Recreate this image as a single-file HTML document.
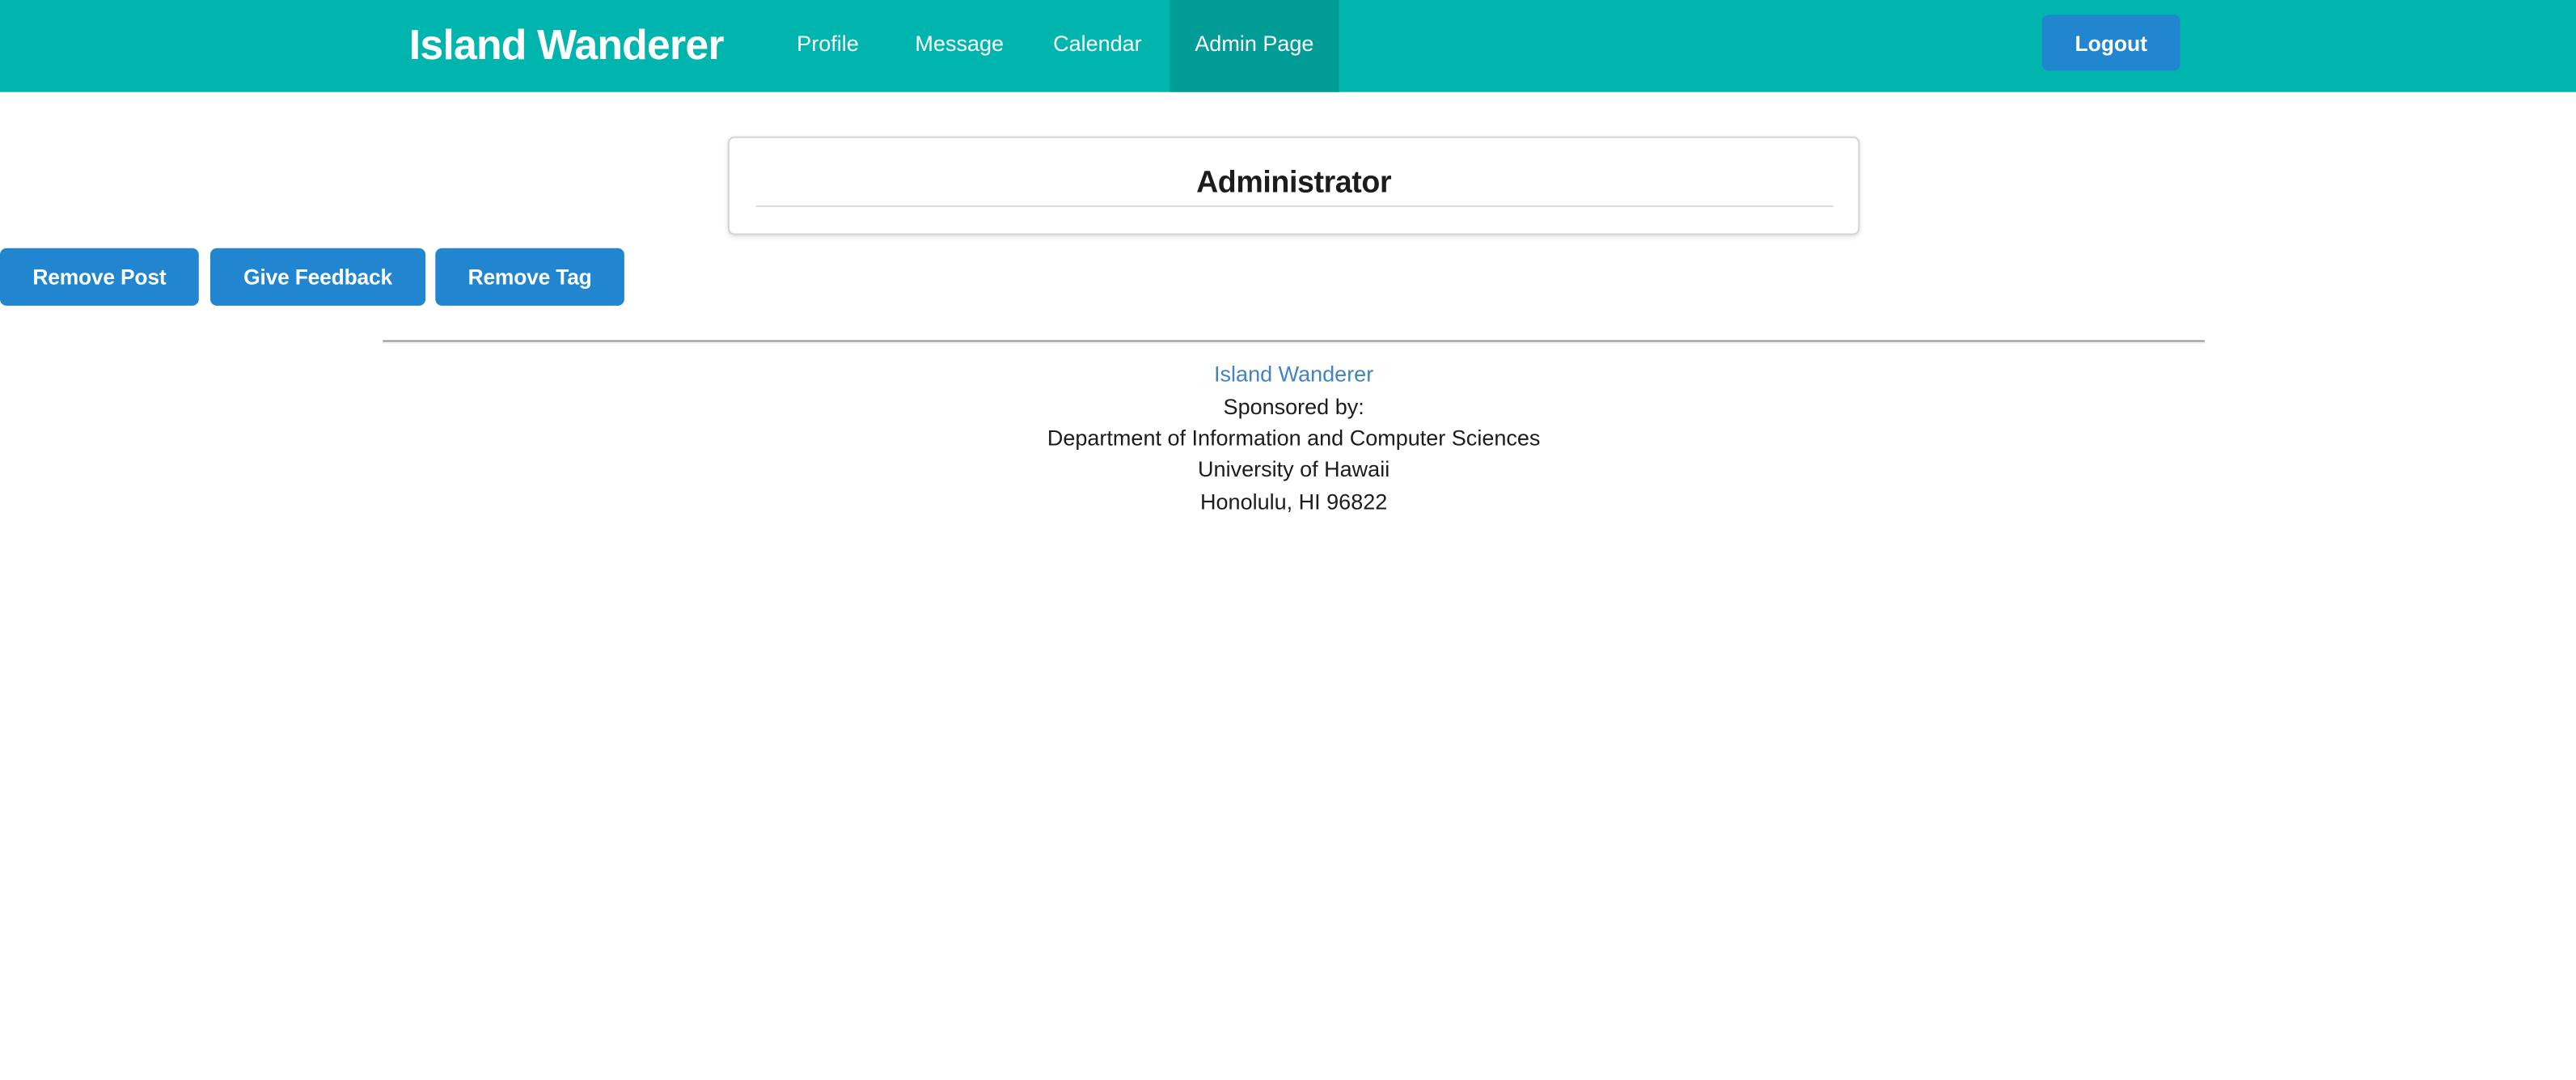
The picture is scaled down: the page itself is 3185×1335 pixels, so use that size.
<!DOCTYPE html>
<html><head><meta charset="utf-8">
<style>
html,body{margin:0;padding:0;background:#fff;}
body{width:3185px;height:1335px;overflow:hidden;}
#w{position:absolute;left:0;top:0;width:1568px;height:657px;transform:scale(2.0313);transform-origin:0 0;font-family:"Liberation Sans",sans-serif;color:#1b1c1d;}
.a{position:absolute;white-space:nowrap;}
.nav{position:absolute;left:0;top:0;width:1568px;height:56px;background:#00b5ad;}
.item{position:absolute;top:0;height:56px;line-height:54px;color:#fff;font-size:13.3px;}
.btn{position:absolute;top:151px;height:35px;line-height:36px;background:#2185d0;color:#fff;font-weight:bold;font-size:13px;text-align:center;border-radius:4px;letter-spacing:-0.1px}
.ft{position:absolute;left:0;width:1575px;text-align:center;font-size:13.3px;line-height:19.4px;}
</style></head><body><div id="w">
<div class="nav">
 <div class="a" style="left:249px;top:10px;font-size:25.5px;font-weight:bold;color:#fff;line-height:36px;letter-spacing:-0.4px">Island Wanderer</div>
 <div class="item" style="left:485px">Profile</div>
 <div class="item" style="left:557px">Message</div>
 <div class="item" style="left:641px">Calendar</div>
 <div class="item" style="left:712px;width:103px;background:#009c95;text-align:center">Admin Page</div>
 <div class="a" style="left:1243px;top:9px;width:84px;height:34px;line-height:36px;background:#2185d0;border-radius:4px;color:#fff;font-weight:bold;font-size:13px;text-align:center">Logout</div>
</div>
<div class="a" style="left:443px;top:83px;width:687px;height:58px;border:1px solid #d4d4d5;border-radius:4px;box-shadow:0 1px 3px rgba(0,0,0,0.12)"></div>
<div class="a" style="left:443px;top:98px;width:689px;text-align:center;font-size:18.5px;font-weight:bold;line-height:26px;letter-spacing:-0.2px">Administrator</div>
<div class="a" style="left:460px;top:125px;width:656px;height:1px;background:#dcdcdd"></div>
<div class="btn" style="left:0;width:121px">Remove Post</div>
<div class="btn" style="left:128px;width:131px">Give Feedback</div>
<div class="btn" style="left:265px;width:115px">Remove Tag</div>
<div class="a" style="left:233px;top:207px;width:1109px;height:1px;background:#999;border-bottom:1px solid #eee"></div>
<div class="ft" style="top:218px;color:#4183c4">Island Wanderer</div>
<div class="ft" style="top:237.5px">Sponsored by:</div>
<div class="ft" style="top:257px">Department of Information and Computer Sciences</div>
<div class="ft" style="top:276px">University of Hawaii</div>
<div class="ft" style="top:295.5px">Honolulu, HI 96822</div>
</div></body></html>
